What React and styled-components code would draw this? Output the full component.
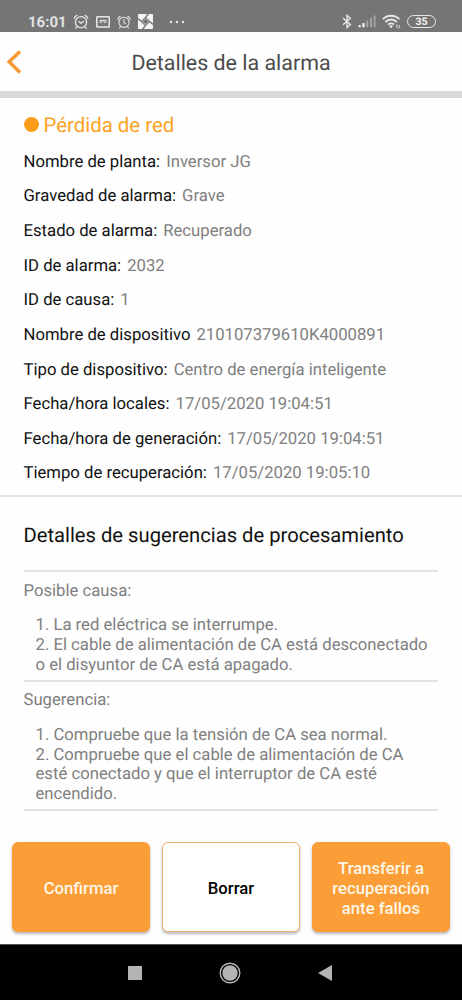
import React from "react";
import styled, { createGlobalStyle } from "styled-components";

const details = [
  { label: "Nombre de planta:", value: "Inversor JG" },
  { label: "Gravedad de alarma:", value: "Grave" },
  { label: "Estado de alarma:", value: "Recuperado" },
  { label: "ID de alarma:", value: "2032" },
  { label: "ID de causa:", value: "1" },
  { label: "Nombre de dispositivo", value: "210107379610K4000891" },
  { label: "Tipo de dispositivo:", value: "Centro de energía inteligente" },
  { label: "Fecha/hora locales:", value: "17/05/2020 19:04:51" },
  { label: "Fecha/hora de generación:", value: "17/05/2020 19:04:51" },
  { label: "Tiempo de recuperación:", value: "17/05/2020 19:05:10" },
];

const suggestions = [
  {
    title: "Posible causa:",
    lines: [
      "1. La red eléctrica se interrumpe.",
      "2. El cable de alimentación de CA está desconectado",
      "o el disyuntor de CA está apagado.",
    ],
  },
  {
    title: "Sugerencia:",
    lines: [
      "1. Compruebe que la tensión de CA sea normal.",
      "2. Compruebe que el cable de alimentación de CA",
      "esté conectado y que el interruptor de CA esté",
      "encendido.",
    ],
  },
];

const AlarmIcon = () => (
  <svg width="16" height="16" viewBox="0 0 16 16" fill="none" stroke="#e8e8e8" strokeWidth="1.3" strokeLinecap="round">
    <circle cx="8" cy="8.2" r="5.6" />
    <path d="M1.2 4.4C1.6 3 2.6 1.9 4 1.4M14.8 4.4C14.4 3 13.4 1.9 12 1.4M5.9 7.4L8 9.2l2.4-1.8M3.9 13l-1 1.2M12.1 13l1 1.2" />
  </svg>
);

const VoicemailIcon = () => (
  <svg width="14" height="12" viewBox="0 0 14 12" fill="none" stroke="#e8e8e8">
    <rect x="0.8" y="0.8" width="12.4" height="10.2" rx="0.6" strokeWidth="1.5" />
    <circle cx="4.9" cy="5.6" r="1.1" />
    <circle cx="9.1" cy="5.6" r="1.1" />
    <path d="M3.8 4.4h6.4" strokeWidth="1" />
  </svg>
);

const ClockIcon = () => (
  <svg width="14" height="14" viewBox="0 0 14 14" fill="none" stroke="#e8e8e8" strokeLinecap="round">
    <circle cx="7" cy="7.3" r="5.1" strokeWidth="1.1" />
    <path d="M0.9 4.3C1.2 2.9 2 1.9 3.2 1.3M13.1 4.3C12.8 2.9 12 1.9 10.8 1.3M7 4.6v3l1.6 1.3M3.4 11.9l-.9 1M10.6 11.9l.9 1" strokeWidth="1.1" />
  </svg>
);

const PinwheelIcon = () => (
  <svg width="15" height="15" viewBox="0 0 15 15">
    <rect width="15" height="15" rx="0.8" fill="#f4f4f4" />
    <path d="M7.5 2.4l5.1 5.1-5.1 5.1-5.1-5.1z" fill="#8a8a8a" />
    <path d="M7.6 3.2L10.4 0M11.6 7.4L15 10.4M7.4 11.8L4.6 15M3.4 7.6L0 4.6" stroke="#757575" strokeWidth="1.3" />
    <path d="M7.5 4.9l2.6 2.6-2.6 2.6-2.6-2.6z" fill="#666" stroke="#c4c4c4" strokeWidth="0.7" />
  </svg>
);

const DotsIcon = () => (
  <svg width="16" height="4" viewBox="0 0 16 4" fill="#e8e8e8">
    <circle cx="2" cy="2" r="1.2" />
    <circle cx="8" cy="2" r="1.2" />
    <circle cx="14" cy="2" r="1.2" />
  </svg>
);

const BluetoothIcon = () => (
  <svg width="10" height="15" viewBox="0 0 10 15" fill="none" stroke="#e8e8e8" strokeWidth="1.3">
    <path d="M1 4l7.4 6.6L5 13.6V1.2l3.4 3L1 10.8" />
  </svg>
);

const SignalIcon = () => (
  <svg width="18" height="13" viewBox="0 0 18 13">
    <path d="M0.5 10h2.2v2.3H.5zM4.3 8h2.3v4.3H4.3z" fill="#f2f2f2" />
    <path d="M8.2 5.6h2v6.7h-2zM12 3h2v9.3h-2zM15.6.4h2v11.9h-2z" fill="#a3a3a3" />
  </svg>
);

const WifiIcon = () => (
  <svg width="19" height="15" viewBox="0 0 19 15" fill="none" stroke="#e8e8e8" strokeWidth="1.9">
    <path d="M0.8 5.2C5.3.5 12.9.5 17.4 5.2M3.4 8c3.2-3.3 8.2-3.3 11.4 0M6.1 10.6c1.7-1.6 4.3-1.6 6 0" />
    <path d="M7.2 12c1.2-.9 2.6-.9 3.8 0L9.1 14.2z" fill="#e8e8e8" stroke="none" />
    <path d="M15 10.8v3.4M14 12l1-1.2M17.2 10.8v3.4M18.2 13l-1 1.2" strokeWidth="0.8" />
  </svg>
);

const BackIcon = () => (
  <svg width="16" height="24" viewBox="0 0 16 24" fill="none" stroke="#f79a34" strokeWidth="3.5">
    <path d="M14 1.4L3.2 11.8 14 22.4" />
  </svg>
);

const App = () => {
  return (
    <>
      <GlobalStyle />
      <Screen>
        <StatusBar>
          <StatusGroup>
            <Time>16:01</Time>
            <AlarmIcon />
            <VoicemailIcon />
            <ClockIcon />
            <PinwheelIcon />
            <More>
              <DotsIcon />
            </More>
          </StatusGroup>
          <StatusGroup $tight>
            <BluetoothIcon />
            <SignalIcon />
            <WifiIcon />
            <Battery>35</Battery>
          </StatusGroup>
        </StatusBar>

        <Header>
          <BackButton aria-label="Volver">
            <BackIcon />
          </BackButton>
          <Title>Detalles de la alarma</Title>
        </Header>

        <AlarmSection>
          <AlarmName>
            <Dot />
            Pérdida de red
          </AlarmName>
          {details.map((e) => (
            <DetailRow key={e.label}>
              <Label>{e.label}</Label>
              <Value>{e.value}</Value>
            </DetailRow>
          ))}
        </AlarmSection>

        <SuggestionSection>
          <SectionTitle>Detalles de sugerencias de procesamiento</SectionTitle>
          {suggestions.map((e) => (
            <Suggestion key={e.title}>
              <SuggestionTitle>{e.title}</SuggestionTitle>
              {e.lines.map((line) => (
                <SuggestionLine key={line}>{line}</SuggestionLine>
              ))}
            </Suggestion>
          ))}
        </SuggestionSection>

        <Actions>
          <ActionButton $primary>Confirmar</ActionButton>
          <ActionButton>Borrar</ActionButton>
          <ActionButton $primary>
            Transferir a<br />
            recuperación
            <br />
            ante fallos
          </ActionButton>
        </Actions>

        <NavBar>
          <svg width="14" height="14" viewBox="0 0 14 14">
            <rect width="14" height="14" fill="#b4b4b4" />
          </svg>
          <svg width="22" height="22" viewBox="0 0 22 22">
            <circle cx="11" cy="11" r="9.8" fill="none" stroke="#b4b4b4" strokeWidth="1.4" />
            <circle cx="11" cy="11" r="7.7" fill="#b4b4b4" />
          </svg>
          <svg width="14" height="16" viewBox="0 0 14 16">
            <path d="M14 0v16L0 8z" fill="#b4b4b4" />
          </svg>
        </NavBar>
      </Screen>
    </>
  );
};

export default App;

const GlobalStyle = createGlobalStyle`
  * {
    box-sizing: border-box;
  }

  body {
    margin: 0;
    background: #fefefe;
    font-family: Roboto, sans-serif;
    text-rendering: geometricPrecision;
  }
`;

const Screen = styled.div`
  width: 462px;
  height: 1000px;
  display: flex;
  flex-direction: column;
  overflow: hidden;
  background: #fefefe;
`;

const StatusBar = styled.div`
  height: 32px;
  flex: none;
  display: flex;
  justify-content: space-between;
  padding: 11px 26px 0 28px;
  background: #757575;
`;

const StatusGroup = styled.div`
  height: 21px;
  display: flex;
  align-items: center;
  gap: ${(props) => (props.$tight ? "6px" : "7px")};
`;

const Time = styled.span`
  width: 38px;
  font-size: 15px;
  font-weight: 700;
  color: #e2e2e2;
  white-space: nowrap;
`;

const More = styled.span`
  display: flex;
  margin-left: 9px;
`;

const Battery = styled.span`
  width: 29px;
  height: 13px;
  display: flex;
  align-items: center;
  justify-content: center;
  border: 1.3px solid #e8e8e8;
  border-radius: 7px;
  font-size: 10.5px;
  font-weight: 700;
  color: #f2f2f2;
`;

const Header = styled.header`
  height: 66px;
  flex: none;
  display: grid;
  grid-template-columns: 40px 1fr 40px;
  align-items: center;
  border-bottom: 7px solid #d9d9d9;
`;

const BackButton = styled.button`
  display: flex;
  padding: 0 0 0 6px;
  border: none;
  background: none;
`;

const Title = styled.h1`
  margin: 0;
  padding-top: 3px;
  font-size: 21.4px;
  font-weight: 400;
  text-align: center;
  color: #4c4c4c;
`;

const AlarmSection = styled.section`
  height: 399px;
  flex: none;
  padding: 9px 23.5px 0;
  border-bottom: 2px solid #e3e3e3;
`;

const AlarmName = styled.div`
  height: 38px;
  display: flex;
  align-items: center;
  gap: 5px;
  padding-bottom: 3px;
  font-size: 20.4px;
  color: #fba21f;
`;

const Dot = styled.span`
  width: 15px;
  height: 15px;
  border-radius: 50%;
  background: #fb9d1a;
`;

const DetailRow = styled.div`
  height: 34.64px;
  display: flex;
  align-items: center;
  gap: 6px;
  font-size: 16.7px;
  white-space: nowrap;
`;

const Label = styled.span`
  color: #111;
`;

const Value = styled.span`
  color: #808080;
`;

const SuggestionSection = styled.section`
  padding: 0 24px 0 23.5px;
`;

const SectionTitle = styled.h2`
  height: 75px;
  margin: 0;
  padding-top: 26px;
  border-bottom: 2px solid #e3e3e3;
  font-size: 20.2px;
  font-weight: 400;
  line-height: 24px;
  color: #111;
  white-space: nowrap;
`;

const Suggestion = styled.div`
  padding: 9.5px 0 4.5px;
  border-bottom: 2px solid #e3e3e3;
  font-size: 16.7px;
  line-height: 19.7px;
  color: #808080;
`;

const SuggestionTitle = styled.div`
  margin-bottom: 15px;
`;

const SuggestionLine = styled.div`
  padding-left: 12px;
  white-space: nowrap;
`;

const Actions = styled.div`
  display: grid;
  grid-template-columns: repeat(3, 1fr);
  gap: 12px;
  margin-top: auto;
  padding: 0 12px 12px;
`;

const ActionButton = styled.button`
  height: 90px;
  padding: 3px 0 0;
  border: 1.5px solid ${(props) => (props.$primary ? "#fb9e37" : "#eeb36a")};
  border-radius: 6px;
  background: ${(props) => (props.$primary ? "#fb9e37" : "#fff")};
  box-shadow: 0 2px 3px rgba(0, 0, 0, 0.28);
  font-family: inherit;
  font-size: 16.7px;
  font-weight: 500;
  line-height: 20px;
  color: ${(props) => (props.$primary ? "#fff6e8" : "#000")};
`;

const NavBar = styled.nav`
  height: 56px;
  flex: none;
  display: grid;
  grid-template-columns: repeat(3, 95px);
  justify-content: center;
  align-items: center;
  justify-items: center;
  padding-right: 2px;
  border-top: 1px solid #555;
  background: #000;
`;
